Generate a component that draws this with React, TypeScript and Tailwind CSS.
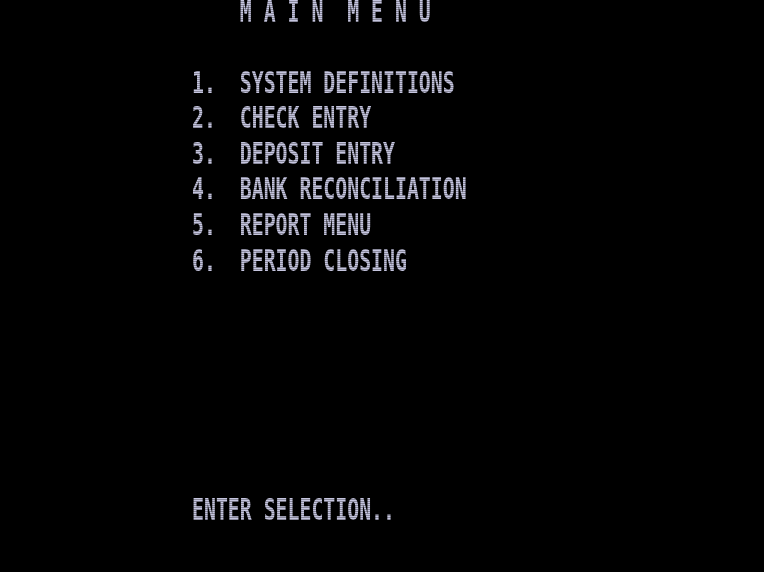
import React from "react";

// 64x16 character terminal: each cell is 764/64 wide and about 572/16 tall.
const LINES: string[] = [
  "                    M A I N  M E N U",
  "",
  "                1.  SYSTEM DEFINITIONS",
  "                2.  CHECK ENTRY",
  "                3.  DEPOSIT ENTRY",
  "                4.  BANK RECONCILIATION",
  "                5.  REPORT MENU",
  "                6.  PERIOD CLOSING",
  "",
  "",
  "",
  "",
  "",
  "",
  "                ENTER SELECTION..",
  "",
];

export default function App() {
  return (
    <div className="relative w-[764px] h-[572px] overflow-hidden bg-black">
      <div className="flex flex-col pl-[1px]">
        {LINES.map((line, i) => (
          <div key={i} className="h-[35.58px] overflow-visible">
            <div className="block whitespace-pre origin-top scale-y-[1.52] mt-[0.5px] font-['DejaVu_Sans_Mono',monospace] text-[19.83px] leading-[16px] font-bold text-[#c6c6e0] blur-[0.5px]">
              {line || " "}
            </div>
          </div>
        ))}
      </div>
      {/* CRT scanlines */}
      <div className="pointer-events-none absolute inset-0 bg-[repeating-linear-gradient(to_bottom,transparent_0px,transparent_1px,rgba(0,0,0,0.3)_1px,rgba(0,0,0,0.3)_2px)]" />
    </div>
  );
}
